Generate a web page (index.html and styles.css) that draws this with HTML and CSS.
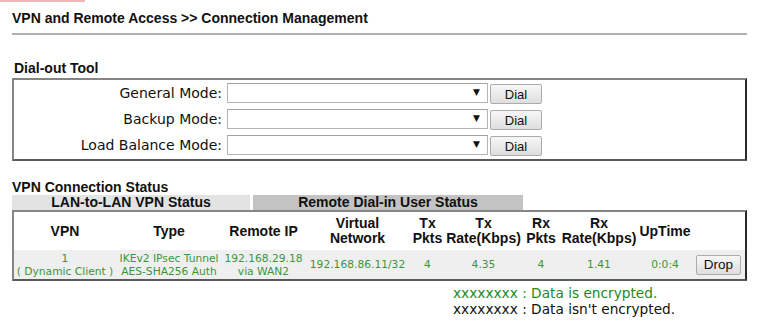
FILE: index.html
```html
<!DOCTYPE html>
<html lang="en">
<head>
    <meta charset="UTF-8">
    <meta name="viewport" content="width=device-width, initial-scale=1.0">
    <title>Connection Management</title>
    <link rel="stylesheet" href="styles.css">
</head>
<body>

    <div class="top-accent"></div>

    <div class="page">
        <h1 class="title">VPN and Remote Access &gt;&gt; Connection Management</h1>

        <h2 class="section">Dial-out Tool</h2>
        <div class="box dial-box">
            <div class="dial-row">
                <label class="dial-label" for="general">General Mode:</label>
                <div class="select-wrap"><select id="general" class="mode-select"><option></option></select></div>
                <button class="btn dial-btn">Dial</button>
            </div>
            <div class="dial-row">
                <label class="dial-label" for="backup">Backup Mode:</label>
                <div class="select-wrap"><select id="backup" class="mode-select"><option></option></select></div>
                <button class="btn dial-btn">Dial</button>
            </div>
            <div class="dial-row">
                <label class="dial-label" for="balance">Load Balance Mode:</label>
                <div class="select-wrap"><select id="balance" class="mode-select"><option></option></select></div>
                <button class="btn dial-btn">Dial</button>
            </div>
        </div>

        <h2 class="section status-title">VPN Connection Status</h2>
        <div class="tabs">
            <div class="tab tab-lan">LAN-to-LAN VPN Status</div>
            <div class="tab tab-remote">Remote Dial-in User Status</div>
        </div>

        <table class="box status-table">
            <colgroup>
                <col style="width: 102px">
                <col style="width: 106px">
                <col style="width: 83px">
                <col style="width: 105px">
                <col style="width: 35px">
                <col style="width: 77px">
                <col style="width: 38px">
                <col style="width: 78px">
                <col style="width: 54px">
                <col style="width: 53px">
            </colgroup>
            <tr class="head-row">
                <th>VPN</th>
                <th>Type</th>
                <th>Remote IP</th>
                <th>Virtual<br>Network</th>
                <th>Tx<br>Pkts</th>
                <th>Tx<br>Rate(Kbps)</th>
                <th>Rx<br>Pkts</th>
                <th>Rx<br>Rate(Kbps)</th>
                <th>UpTime</th>
                <th></th>
            </tr>
            <tr class="data-row">
                <td>1<br>( Dynamic Client )</td>
                <td>IKEv2 IPsec Tunnel<br>AES-SHA256 Auth</td>
                <td>192.168.29.18<br>via WAN2</td>
                <td>192.168.86.11/32</td>
                <td>4</td>
                <td>4.35</td>
                <td>4</td>
                <td>1.41</td>
                <td>0:0:4</td>
                <td><button class="btn drop-btn">Drop</button></td>
            </tr>
        </table>

        <div class="legend">
            <div class="legend-secure">xxxxxxxx : Data is encrypted.</div>
            <div>xxxxxxxx : Data isn't encrypted.</div>
        </div>
    </div>

</body>
</html>
```

FILE: styles.css
```css
body {
    margin: 0;
    font-family: "DejaVu Sans", Verdana, sans-serif;
    color: #000;
    background-color: #fff;
}
.top-accent {
    width: 85px;
    height: 2px;
    background-color: #ebb9b9;
}
.page {
    width: 735px;
    padding-left: 12px;
}
.title {
    margin: 0;
    padding: 8px 0 7px;
    font: bold 14px/16px "Liberation Sans", Arial, sans-serif;
    color: #111;
    border-bottom: 2px solid #b0b0b0;
}
.section {
    margin: 25px 0 2px;
    padding-left: 2px;
    font: bold 14px/16px "Liberation Sans", Arial, sans-serif;
    color: #111;
}
.status-title {
    margin: 18px 0 0;
    padding-left: 0;
}
.box {
    border: 2px solid;
    border-color: #858585 #2a2a2a #5a5a5a #858585;
}
.dial-box {
    padding-bottom: 1px;
}
.dial-row {
    display: flex;
    align-items: center;
    height: 26px;
}
.dial-label {
    width: 208px;
    margin-right: 5px;
    text-align: right;
    font-size: 14px;
    color: #111;
}
.select-wrap {
    position: relative;
    margin-right: 2px;
}
.select-wrap::after {
    content: "\25BC";
    position: absolute;
    right: 8px;
    top: 4px;
    font-size: 9px;
    color: #111;
    pointer-events: none;
}
.mode-select {
    display: block;
    width: 261px;
    height: 20px;
    appearance: none;
    -webkit-appearance: none;
    background-color: #fff;
    border: 1px solid #b5b5b5;
    border-top-color: #a0a0a0;
    border-radius: 0;
}
.btn {
    padding: 0;
    height: 20px;
    font: 13px "Liberation Sans", Arial, sans-serif;
    color: #111;
    background: linear-gradient(#f7f7f7, #dedede);
    border: 1px solid #acacac;
    border-radius: 2px;
}
.dial-btn {
    width: 52px;
    margin-top: 2px;
}
.tabs {
    display: flex;
    gap: 3px;
}
.tab {
    height: 15px;
    font: bold 14px/15px "Liberation Sans", Arial, sans-serif;
    text-align: center;
    color: #111;
}
.tab-lan {
    width: 238px;
    background-color: #e3e3e3;
}
.tab-remote {
    width: 270px;
    background-color: #c3c3c3;
}
.status-table {
    width: 735px;
    table-layout: fixed;
    border-collapse: separate;
    border-spacing: 0;
}
.status-table th,
.status-table td {
    padding: 0;
    text-align: center;
    vertical-align: middle;
    white-space: nowrap;
}
.head-row th {
    height: 38px;
    font: bold 14px/15px "Liberation Sans", Arial, sans-serif;
    color: #111;
}
.data-row td {
    height: 29px;
    font-size: 10.7px;
    line-height: 13px;
    color: #3a963a;
    background-color: #efefef;
}
.drop-btn {
    width: 45px;
    font-size: 13.5px;
}
.legend {
    margin-top: 4px;
    padding-left: 441px;
    font-size: 13.7px;
    line-height: 16px;
    color: #111;
}
.legend-secure {
    color: #1b8c1b;
}
```
